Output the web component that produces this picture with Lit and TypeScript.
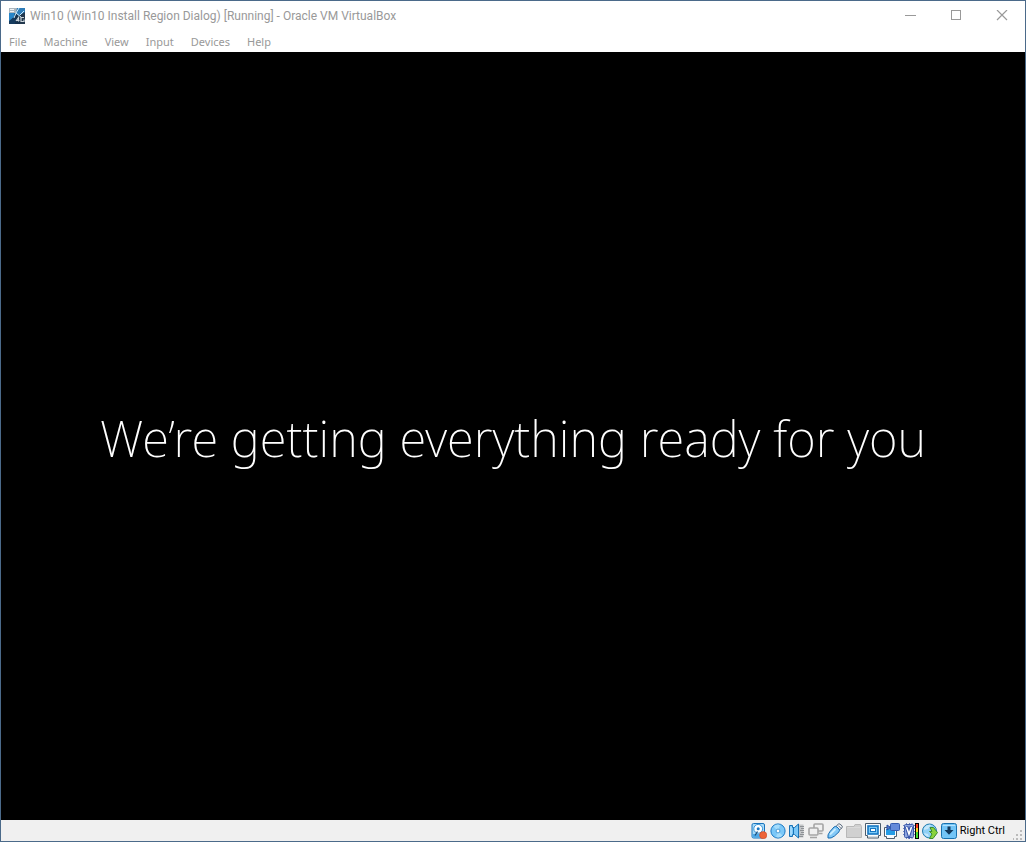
import { LitElement, html, css, svg, TemplateResult } from "lit";
import { customElement } from "lit/decorators.js";

const icon = (body: TemplateResult) => html`
  <svg width="16" height="16" viewBox="0 0 16 16" aria-hidden="true">${body}</svg>
`;

const appLogo = icon(svg`
  <rect width="16" height="16" fill="#17324d"/>
  <path d="M0 5L6 4L5 9L1 13L0 13Z" fill="#2785c8"/>
  <path d="M7 0H16V5L10 8L6 5Z" fill="#2d7cb8"/>
  <path d="M0 13L5 9L7 12L6 16H0Z" fill="#173b5e"/>
  <path d="M10 8L16 4V16H11Z" fill="#23384d"/>
  <path d="M0 0H8L7 5H0Z" fill="#aab5bd"/>
  <path d="M1 1.5H5M1 3.5H5" stroke="#eef2f5" stroke-width="1"/>
  <path d="M10 0L7 5L5 10M7 5L12 9M15 3L11 7" fill="none" stroke="#c9e9fb" stroke-width="1"/>
  <path d="M7 13L9.5 9.5V13.5M7 12.5H10.5M12 9.5H15M12 9V13.5H15V11.5" fill="none" stroke="#c9d2d8" stroke-width="1.2"/>
`);

const hardDisk = icon(svg`
  <rect x="1" y=".5" width="12.5" height="14.5" rx="1.5" fill="#a9dcfa" stroke="#1974bd"/>
  <rect x="1.5" y="11" width="11.5" height="3.5" fill="#4fa9e8"/>
  <circle cx="7.2" cy="5.8" r="4.4" fill="#fff" stroke="#3a93d6" stroke-width="1"/>
  <circle cx="7.2" cy="5.8" r="1.5" fill="#1b78c3"/>
  <path d="M4 12.5L6.5 8.5" stroke="#174a78" stroke-width="1.3"/>
  <circle cx="12.2" cy="12.2" r="3.6" fill="#ee6337" stroke="#c94a25" stroke-width=".6"/>
`);

const opticalDisk = icon(svg`
  <circle cx="8" cy="8" r="7.1" fill="#7cc8f8" stroke="#1a79c4"/>
  <path d="M8 8L3.5 3.5A6.4 6.4 0 0 1 10 1.9ZM8 8L12.5 12.5A6.4 6.4 0 0 1 6 14.1Z" fill="#a5dcfb"/>
  <circle cx="8" cy="8" r="1.9" fill="#fff" stroke="#2b88cb" stroke-width=".8"/>
`);

const audio = icon(svg`
  <path d="M8 1.5H14.5V14.5H8Z" fill="#c3c5c7"/>
  <path d="M11 3.5H15M12 5.5H15M11 7.5H15M12 9.5H15M11 11.5H15M10 13.5H14" stroke="#8d9195"/>
  <path d="M.5 2.5H3.5V4.5H5.5L9.5 1V15L5.5 11.5H3.5V13.5H.5Z" fill="#7cc8f8" stroke="#1972b5"/>
  <path d="M4.5 5V11" stroke="#1972b5"/><path d="M2 4V12" stroke="#c5eaff"/>
`);

const network = icon(svg`
  <rect x="6" y="1" width="9" height="7" rx="1" fill="#f0f0f0" stroke="#a5a5a5" stroke-width="1.6"/>
  <path d="M11 10.5H14.5" stroke="#a5a5a5" stroke-width="1.5"/>
  <rect x="1" y="5" width="9" height="7" rx="1" fill="#f0f0f0" stroke="#a5a5a5" stroke-width="1.6"/>
  <path d="M2 14.5H9" stroke="#a5a5a5" stroke-width="1.5"/>
`);

const usb = icon(svg`
  <path d="M9 3.5L11.5 .8Q12.5 .4 15 2.8Q15.8 4 15 4.8L12.5 7Z" fill="#f3f5f8" stroke="#59697b"/>
  <path d="M11.4 2.7L12.4 3.7M13 4.3L14 5.3" stroke="#39485a"/>
  <path d="M7 4Q8.5 2.8 10 4L12 6Q13 7.3 12 8.8L7.5 13Q4 15.8 1 15Q.1 12 3 8.5Z" fill="#83c9f7" stroke="#176bb0"/>
  <path d="M3 11.5L8.5 6" stroke="#c9edff" stroke-width="1.8"/>
`);

const folder = icon(svg`
  <path d="M.5 14.5V3.5H8L9 1.5H14.5L15.5 3.5V14.5Z" fill="#d0d0d0" stroke="#b8b8b8"/>
  <path d="M1.5 4.5H14.5" stroke="#dadada"/>
`);

const display = icon(svg`
  <path d="M.5 .5H15.5V12.5H13.5V15H2.5V12.5H.5Z" fill="#fafcfd" stroke="#4b5c6c"/>
  <rect x="3" y="3" width="10" height="8" fill="#7ccaf7" stroke="#1576c2" stroke-width="1.6"/>
  <rect x="5.5" y="5.5" width="5" height="3" fill="#fff" stroke="#1576c2"/>
  <path d="M3 13.5H13" stroke="#d7dde1"/>
`);

const recording = icon(svg`
  <path d="M.5 4.5H12.5V13.5H10.5V15.5H2.5V13.5H.5Z" fill="#f7fbff" stroke="#4b5c6c"/>
  <rect x="2" y="6" width="9" height="6" fill="#249ce5"/>
  <path d="M3 2L6 4V5L3 7Z" fill="#527bd0" stroke="#284c9c"/>
  <rect x="6.5" y=".5" width="9" height="7" rx="1" fill="#648ada" stroke="#345baf"/>
`);

const processor = icon(svg`
  <path d="M0 2.5H12M0 5.5H12M0 8.5H12M0 11.5H12M3.5 0V16M6.5 0V16M9 0V16" stroke="#7186c2"/>
  <rect x="1.5" y="1.5" width="9" height="13" rx="1" fill="#8fa6e0" stroke="#405da9"/>
  <path d="M3.5 3.5L6 11.5L8.5 3.5" stroke="#3552a8" stroke-width="3.6" fill="none"/>
  <path d="M3.5 4L6 11L8.5 4" stroke="#fff" stroke-width="1.6" fill="none"/>
  <rect x="12" width="4" height="16" fill="#000"/>
  <rect x="13" y="1" width="2" height="4" fill="#f83b20"/>
  <rect x="13" y="5" width="2" height="4" fill="#ffd52a"/>
  <rect x="13" y="9" width="2" height="6" fill="#42df32"/>
`);

const mouse = icon(svg`
  <circle cx="7.5" cy="8" r="7" fill="#8fd0f5" stroke="#237cae"/>
  <path d="M2 5Q5 1 9 2L6 6L2 7ZM2 10L6 11L7 14Q3 13 2 10Z" fill="#c4e7fa"/>
  <path d="M8 4.5H11.5L15.5 9.5L11 15.5H7.5L10 11L7.5 8.5H10Z" fill="#8bd33c" stroke="#3d8c2e"/>
`);

const keyboard = icon(svg`
  <rect x=".5" y=".5" width="15" height="15" rx="2" fill="#73c5f7" stroke="#1871af"/>
  <path d="M2 2.5H14" stroke="#b3e3ff"/>
  <path d="M6.5 3.5H9.5V7H12.5L8 11.8L3.5 7H6.5Z" fill="#12395c"/>
`);

const indicators: [string, TemplateResult][] = [
  ["Hard disks", hardDisk],
  ["Optical drives", opticalDisk],
  ["Audio", audio],
  ["Network", network],
  ["USB devices", usb],
  ["Shared folders", folder],
  ["Display", display],
  ["Recording", recording],
  ["Processor features", processor],
  ["Mouse integration", mouse],
  ["Keyboard", keyboard],
];

@customElement("app-root")
export class AppRoot extends LitElement {
  static styles = css`
    :host {
      display: flex;
      flex-direction: column;
      box-sizing: border-box;
      min-height: 100vh;
      border: 1px solid #4b6a8a;
      background: #fff;
      font-family: "Noto Sans", sans-serif;
      font-size: 11px;
      color: #999;
    }
    button {
      margin: 0;
      padding: 0;
      border: 0;
      background: none;
      color: inherit;
      font: inherit;
    }
    svg { display: block; }
    .titlebar {
      display: flex;
      align-items: center;
      height: 30px;
      padding-left: 8px;
    }
    .title {
      flex: 1;
      margin: 0;
      padding-left: 5px;
      font-family: Roboto, sans-serif;
      font-size: 12px;
      font-weight: 400;
      line-height: 16px;
      white-space: nowrap;
    }
    .controls { display: flex; }
    .control {
      display: flex;
      align-items: center;
      justify-content: center;
      width: 46px;
      height: 29px;
    }
    .menu {
      display: flex;
      gap: 1px;
      height: 21px;
    }
    .menu-item {
      padding: 0 8px;
      line-height: 20px;
    }
    .screen {
      flex: 1;
      display: flex;
      align-items: center;
      justify-content: center;
      background: #000;
    }
    .message {
      margin: 0;
      padding-top: 4px;
      color: #fff;
      font-size: 49px;
      font-weight: 250;
      line-height: 68px;
      text-align: center;
    }
    .statusbar {
      display: flex;
      align-items: center;
      justify-content: flex-end;
      gap: 3px;
      height: 21px;
      background: #f0f0f0;
      color: #000;
    }
    .host-key {
      font-family: Roboto, sans-serif;
      font-size: 11px;
      line-height: 16px;
    }
    .grip {
      align-self: flex-end;
      margin-left: 5px;
    }
  `;

  render() {
    return html`
      <header class="titlebar">
        ${appLogo}
        <h1 class="title">Win10 (Win10 Install Region Dialog) [Running] - Oracle VM VirtualBox</h1>
        <div class="controls">
          <button class="control" aria-label="Minimize">
            <svg width="12" height="12" viewBox="0 0 12 12"><path d="M1 5.5H12" stroke="#999"/></svg>
          </button>
          <button class="control" aria-label="Maximize">
            <svg width="12" height="12" viewBox="0 0 12 12"><rect x="1.5" y=".5" width="9" height="9" fill="none" stroke="#999"/></svg>
          </button>
          <button class="control" aria-label="Close">
            <svg width="12" height="12" viewBox="0 0 12 12"><path d="M1 0L11 10M11 0L1 10" stroke="#999" stroke-width="1.2"/></svg>
          </button>
        </div>
      </header>
      <nav class="menu">
        ${["File", "Machine", "View", "Input", "Devices", "Help"].map(
          (name) => html`<button class="menu-item">${name}</button>`
        )}
      </nav>
      <main class="screen">
        <p class="message">We’re getting everything ready for you</p>
      </main>
      <footer class="statusbar">
        ${indicators.map(([name, glyph]) => html`<button aria-label=${name}>${glyph}</button>`)}
        <span class="host-key">Right Ctrl</span>
        <svg class="grip" width="12" height="12" viewBox="0 0 12 12" aria-hidden="true">
          <path d="M7 1h2v2h-2zM7 5h2v2h-2zM3 5h2v2h-2zM7 9h2v2h-2zM3 9h2v2h-2zM-1 9h2v2h-2z" fill="#bbb"/>
        </svg>
      </footer>
    `;
  }
}
